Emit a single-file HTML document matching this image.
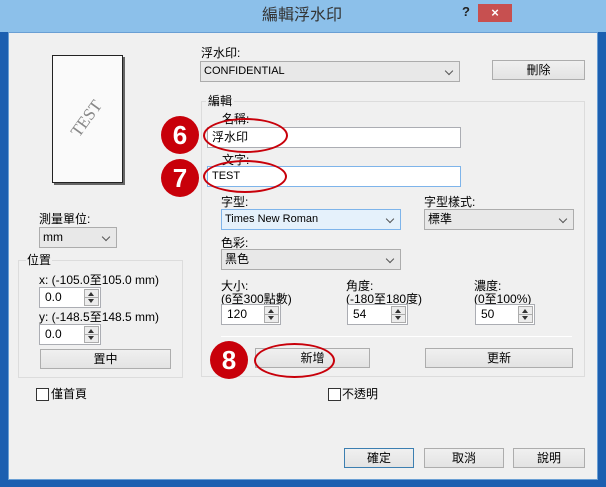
<!DOCTYPE html>
<html><head><meta charset="utf-8"><style>
*{box-sizing:border-box;margin:0;padding:0}
body{width:606px;height:487px;overflow:hidden;background:#1c5fb0;font-family:"Liberation Sans","Noto Sans CJK TC",sans-serif;font-size:12px;color:#000;position:relative}
.a{position:absolute}
.tb{left:0;top:0;width:606px;height:32px;background:#8cc0ea}
.cl{left:8px;top:32px;width:590px;height:448px;background:#f0f0f0;border:1px solid #6a9fd4}
.lbl{position:absolute;font-size:12px;line-height:14px;white-space:nowrap}
.sel{position:absolute;height:21px;background:#e8e8e8;border:1px solid #acacac;font-size:11px;line-height:19px;padding-left:3px}
.sel:after{content:"";position:absolute;right:7px;top:6px;width:5px;height:5px;border-right:1.5px solid #555;border-bottom:1.5px solid #555;transform:rotate(45deg)}
.inp{position:absolute;height:21px;background:#fff;border:1px solid #abadb3;font-size:12px;line-height:19px;padding-left:4px}
.btn{position:absolute;height:20px;background:linear-gradient(#f0f0f0,#e3e3e3);border:1px solid #adadad;text-align:center;line-height:18px;font-size:12px}
.grp{position:absolute;border:1px solid #dcdcdc}
.spin{position:absolute;height:21px;background:#fff;border:1px solid #abadb3;font-size:12px;line-height:19px;padding-left:5px}
.spin i{position:absolute;right:1px;top:1px;width:15px;height:17px;background:#ececec;border:1px solid #acacac}
.spin i:before{content:"";position:absolute;left:3px;top:2px;border:3.5px solid transparent;border-bottom:4px solid #333;border-top:0}
.spin i:after{content:"";position:absolute;left:3px;bottom:2px;border:3.5px solid transparent;border-top:4px solid #333;border-bottom:0}
.spin i b{position:absolute;left:0;top:7px;width:13px;height:1px;background:#acacac}
.num{position:absolute;width:38px;height:38px;border-radius:50%;background:#c8000a;color:#fff;font-size:26px;font-weight:bold;line-height:38px;text-align:center}
.ell{position:absolute;border:2px solid #c8000a;border-radius:50%}
.cb{position:absolute;width:13px;height:13px;background:#fff;border:1px solid #333}
</style></head><body>
<div class="a tb"></div>
<div class="lbl" style="left:262px;top:7px;font-size:16px;line-height:18px;color:#333">編輯浮水印</div>
<div class="lbl" style="left:462px;top:5px;font-size:13px;font-weight:bold;color:#222">?</div>
<div class="a" style="left:478px;top:4px;width:34px;height:18px;background:#c75050;color:#fff;text-align:center;font-size:13px;line-height:18px;font-weight:bold">×</div>
<div class="a cl"></div>

<div class="a" style="left:54px;top:57px;width:71px;height:128px;background:#666"></div>
<div class="a" style="left:52px;top:55px;width:71px;height:128px;background:#fafafa;border:1px solid #222"></div>
<div class="lbl" style="left:66px;top:110px;font-family:'Liberation Serif',serif;font-size:17px;color:#888;transform:rotate(-54deg);line-height:17px">TEST</div>

<div class="lbl" style="left:201px;top:46px">浮水印:</div>
<div class="sel" style="left:200px;top:61px;width:260px">CONFIDENTIAL</div>
<div class="btn" style="left:492px;top:60px;width:93px">刪除</div>

<div class="grp" style="left:201px;top:101px;width:384px;height:276px"></div>
<div class="lbl" style="left:206px;top:94px;background:#f0f0f0;padding:0 2px">編輯</div>
<div class="lbl" style="left:222px;top:112px">名稱:</div>
<div class="inp" style="left:207px;top:127px;width:254px">浮水印</div>
<div class="lbl" style="left:222px;top:153px">文字:</div>
<div class="inp" style="left:207px;top:166px;width:254px;border-color:#7eb4ea;font-size:11px">TEST</div>
<div class="lbl" style="left:221px;top:195px">字型:</div>
<div class="sel" style="left:221px;top:209px;width:180px;background:#e5f1fb;border-color:#7eb4ea">Times New Roman</div>
<div class="lbl" style="left:424px;top:195px">字型樣式:</div>
<div class="sel" style="left:424px;top:209px;width:150px;font-size:12px">標準</div>
<div class="lbl" style="left:221px;top:236px">色彩:</div>
<div class="sel" style="left:221px;top:249px;width:180px;font-size:12px">黑色</div>
<div class="lbl" style="left:221px;top:280px;line-height:13px">大小:<br>(6至300點數)</div>
<div class="spin" style="left:221px;top:304px;width:60px">120<i><b></b></i></div>
<div class="lbl" style="left:346px;top:280px;line-height:13px">角度:<br>(-180至180度)</div>
<div class="spin" style="left:347px;top:304px;width:61px">54<i><b></b></i></div>
<div class="lbl" style="left:474px;top:280px;line-height:13px">濃度:<br>(0至100%)</div>
<div class="spin" style="left:475px;top:304px;width:60px">50<i><b></b></i></div>
<div class="a" style="left:221px;top:336px;width:351px;height:1px;background:#a0a0a0;border-bottom:1px solid #fff"></div>
<div class="btn" style="left:255px;top:348px;width:115px">新增</div>
<div class="btn" style="left:425px;top:348px;width:148px">更新</div>

<div class="lbl" style="left:39px;top:212px">測量單位:</div>
<div class="sel" style="left:39px;top:227px;width:78px;font-size:12px">mm</div>
<div class="grp" style="left:18px;top:260px;width:165px;height:118px"></div>
<div class="lbl" style="left:26px;top:253px;background:#f0f0f0;padding:0 1px">位置</div>
<div class="lbl" style="left:39px;top:273px">x: (-105.0至105.0 mm)</div>
<div class="spin" style="left:39px;top:287px;width:62px">0.0<i><b></b></i></div>
<div class="lbl" style="left:39px;top:310px">y: (-148.5至148.5 mm)</div>
<div class="spin" style="left:39px;top:324px;width:62px">0.0<i><b></b></i></div>
<div class="btn" style="left:40px;top:349px;width:131px">置中</div>

<div class="cb" style="left:36px;top:388px"></div>
<div class="lbl" style="left:51px;top:387px">僅首頁</div>
<div class="cb" style="left:328px;top:388px"></div>
<div class="lbl" style="left:342px;top:387px">不透明</div>

<div class="btn" style="left:344px;top:448px;width:70px;border-color:#3c7fb1">確定</div>
<div class="btn" style="left:424px;top:448px;width:80px">取消</div>
<div class="btn" style="left:513px;top:448px;width:72px">說明</div>

<div class="num" style="left:161px;top:116px">6</div>
<div class="num" style="left:161px;top:159px">7</div>
<div class="num" style="left:210px;top:341px">8</div>
<div class="ell" style="left:203px;top:118px;width:85px;height:35px"></div>
<div class="ell" style="left:203px;top:160px;width:84px;height:33px"></div>
<div class="ell" style="left:254px;top:343px;width:81px;height:35px"></div>
</body></html>
